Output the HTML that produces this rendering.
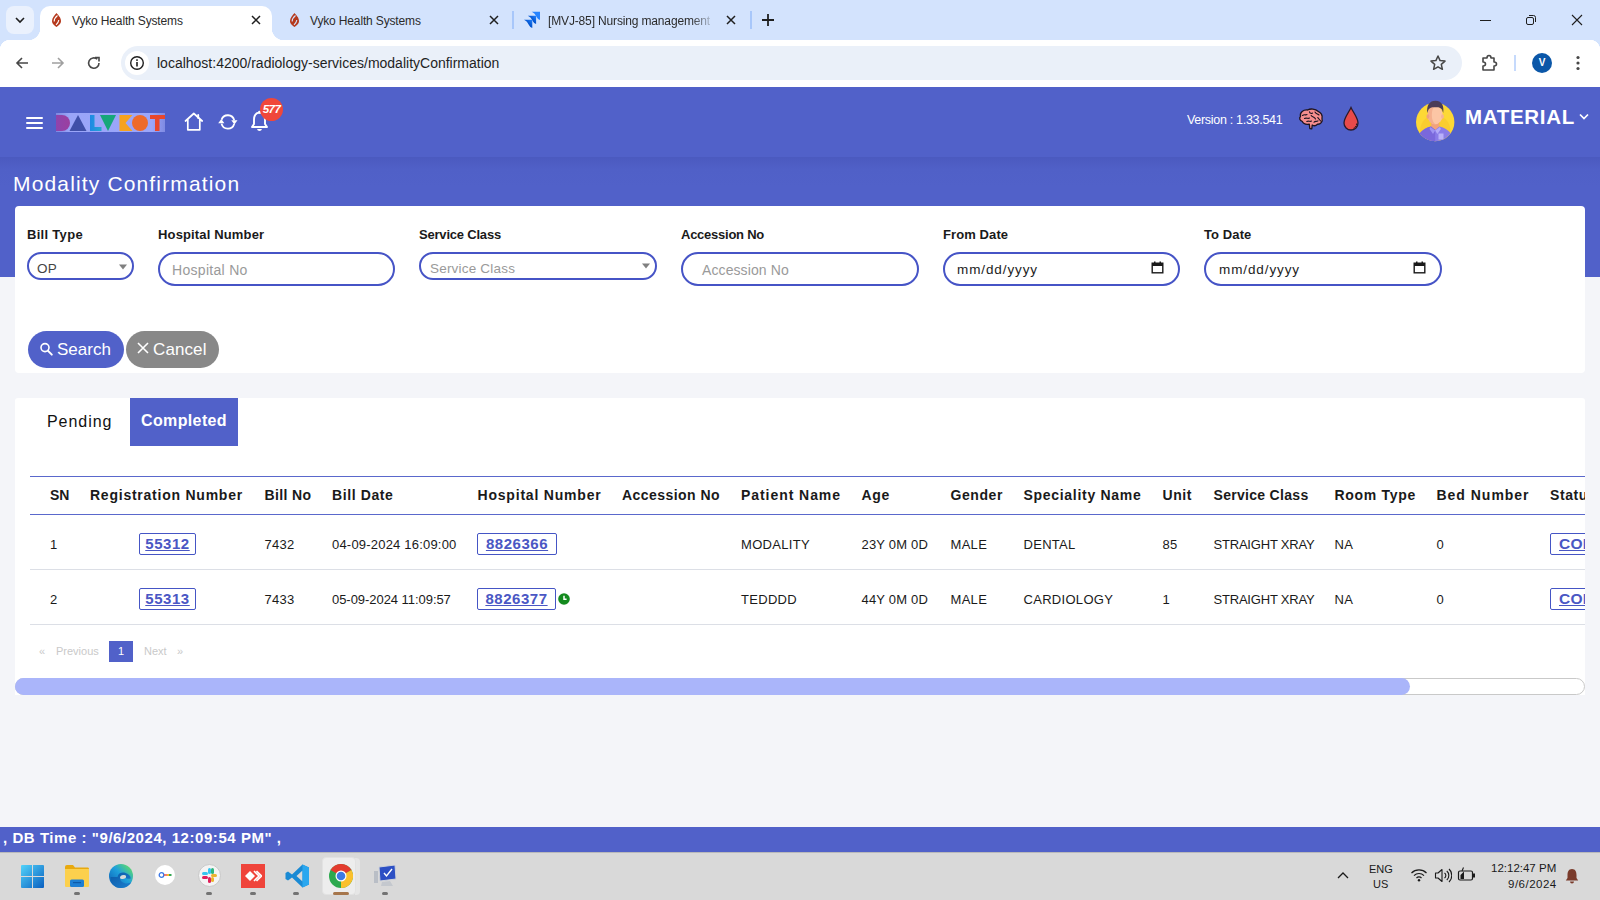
<!DOCTYPE html>
<html><head><meta charset="utf-8">
<style>
*{box-sizing:border-box;margin:0;padding:0}
html,body{width:1600px;height:900px;overflow:hidden;background:#f4f5f9;font-family:"Liberation Sans",sans-serif;position:relative}
.a{position:absolute}
.nw{white-space:nowrap}
/* chrome */
#tabstrip{left:0;top:0;width:1600px;height:40px;background:#d3e3fd}
#toolbar{left:0;top:40px;width:1600px;height:47px;background:#fff}
.tabtxt{font-size:12px;color:#2b2b2b;top:14px;letter-spacing:-0.15px}
#omni{left:121px;top:46px;width:1341px;height:34px;border-radius:17px;background:#eaf0f9}
/* header */
#hdr{left:0;top:87px;width:1600px;height:190px;background:#5161c9}
#hdrshadow{left:0;top:157px;width:1600px;height:30px;background:linear-gradient(#4b5abf,#5060c7 40%,#5161c9)}
.card{background:#fff;border-radius:4px}
.lbl{font-size:13px;font-weight:700;color:#1a1a1a;letter-spacing:0.3px;top:227px}
.inp{border:2px solid #4654c6;border-radius:18px;background:#fff}
.ph{font-size:13.5px;color:#9a9a9a;letter-spacing:0.4px}
.th{font-size:14px;font-weight:700;color:#1a1a1a;top:487px;letter-spacing:0.7px}
.td{font-size:13px;color:#1a1a1a;letter-spacing:0.3px}
.lnk{border:1px solid #4555c5;border-radius:2px;color:#4a57c4;text-decoration:underline;font-size:15px;font-weight:700;text-align:center;letter-spacing:0.55px;line-height:20px!important}
</style></head>
<body>
<!-- ============ CHROME TAB STRIP ============ -->
<div id="tabstrip" class="a"></div>
<!-- active tab -->
<div class="a" style="left:40px;top:6px;width:232px;height:40px;background:#fff;border-radius:10px 10px 0 0"></div>
<div class="a" style="left:28px;top:28px;width:12px;height:12px;background:radial-gradient(circle at 0 0,#d3e3fd 12px,#fff 12.5px)"></div>
<div class="a" style="left:6px;top:6px;width:28px;height:28px;border-radius:8px;background:#eaf1fd"></div>
<svg class="a" style="left:13px;top:14px" width="14" height="12" viewBox="0 0 14 12"><path d="M3 4 L7 8 L11 4" fill="none" stroke="#1f1f1f" stroke-width="1.6"/></svg>
<div class="a" style="left:272px;top:28px;width:12px;height:12px;background:radial-gradient(circle at 100% 0,#d3e3fd 12px,#fff 12.5px)"></div>
<svg class="a" style="left:51px;top:12px" width="11" height="16" viewBox="0 0 11 16"><path d="M5.5 1 C7.5 3.5 10 5.5 10 9 C10 12 7.5 13.5 5.5 15 C3.5 13.5 1 12 1 9 C1 5.5 3.5 3.5 5.5 1 Z" fill="#b5391d"/><path d="M6.5 3.5 C4 5.5 3 7 3.2 9.5" fill="none" stroke="#fff" stroke-width="1.1"/><path d="M7.8 8 C7.5 10.5 6.5 11.5 5 12.8" fill="none" stroke="#fff" stroke-width="1.1"/></svg>
<div class="a nw tabtxt" style="left:72px">Vyko Health Systems</div>
<svg class="a" style="left:250px;top:14px" width="12" height="12" viewBox="0 0 12 12"><path d="M2 2 L10 10 M10 2 L2 10" stroke="#1f1f1f" stroke-width="1.5"/></svg>
<!-- tab 2 -->
<svg class="a" style="left:289px;top:12px" width="11" height="16" viewBox="0 0 11 16"><path d="M5.5 1 C7.5 3.5 10 5.5 10 9 C10 12 7.5 13.5 5.5 15 C3.5 13.5 1 12 1 9 C1 5.5 3.5 3.5 5.5 1 Z" fill="#b5391d"/><path d="M6.5 3.5 C4 5.5 3 7 3.2 9.5" fill="none" stroke="#d3e3fd" stroke-width="1.1"/><path d="M7.8 8 C7.5 10.5 6.5 11.5 5 12.8" fill="none" stroke="#d3e3fd" stroke-width="1.1"/></svg>
<div class="a nw tabtxt" style="left:310px">Vyko Health Systems</div>
<svg class="a" style="left:488px;top:14px" width="12" height="12" viewBox="0 0 12 12"><path d="M2 2 L10 10 M10 2 L2 10" stroke="#1f1f1f" stroke-width="1.5"/></svg>
<div class="a" style="left:512px;top:11px;width:2px;height:18px;background:#a8c7fa"></div>
<!-- tab 3 -->
<svg class="a" style="left:523px;top:11px" width="18" height="18" viewBox="0 0 18 18"><defs><linearGradient id="gj" x1="1" y1="0" x2="0" y2="1"><stop offset="0" stop-color="#2684ff"/><stop offset="0.5" stop-color="#0052cc"/><stop offset="1" stop-color="#2684ff"/></linearGradient></defs><path transform="translate(8.7,0.8)" d="M0 0 H8.3 V8.3 C7 8 5.6 6.8 4.6 4.8 C3.8 3 2.4 1 0 0 Z" fill="#2684ff"/><path transform="translate(4.8,4.8)" d="M0 0 H8.3 V8.3 C7 8 5.6 6.8 4.6 4.8 C3.8 3 2.4 1 0 0 Z" fill="url(#gj)"/><path transform="translate(1,8.7)" d="M0 0 H8.3 V8.3 C7 8 5.6 6.8 4.6 4.8 C3.8 3 2.4 1 0 0 Z" fill="url(#gj)"/></svg>
<div class="a nw tabtxt" style="left:548px;width:168px;overflow:hidden;-webkit-mask-image:linear-gradient(90deg,#000 85%,transparent)">[MVJ-85] Nursing management</div>
<svg class="a" style="left:725px;top:14px" width="12" height="12" viewBox="0 0 12 12"><path d="M2 2 L10 10 M10 2 L2 10" stroke="#1f1f1f" stroke-width="1.5"/></svg>
<div class="a" style="left:750px;top:11px;width:2px;height:18px;background:#a8c7fa"></div>
<svg class="a" style="left:760px;top:12px" width="16" height="16" viewBox="0 0 16 16"><path d="M8 2 V14 M2 8 H14" stroke="#1f1f1f" stroke-width="1.8"/></svg>
<!-- window controls -->
<div class="a" style="left:1480px;top:20px;width:11px;height:1px;background:#1f1f1f"></div>
<svg class="a" style="left:1524px;top:13px" width="14" height="14" viewBox="0 0 14 14"><rect x="2.5" y="4.5" width="7" height="7" rx="1.5" fill="none" stroke="#1f1f1f" stroke-width="1"/><path d="M5 2.5 H9.5 Q11.5 2.5 11.5 4.5 V9" fill="none" stroke="#1f1f1f" stroke-width="1"/></svg>
<svg class="a" style="left:1570px;top:13px" width="14" height="14" viewBox="0 0 14 14"><path d="M2 2 L12 12 M12 2 L2 12" stroke="#1f1f1f" stroke-width="1.1"/></svg>

<!-- ============ TOOLBAR ============ -->
<div id="toolbar" class="a"></div>
<div class="a" style="left:0;top:40px;width:10px;height:10px;background:radial-gradient(circle at 100% 100%,#fff 10px,#d3e3fd 10.5px)"></div>
<div class="a" style="left:1590px;top:40px;width:10px;height:10px;background:radial-gradient(circle at 0 100%,#fff 10px,#d3e3fd 10.5px)"></div>
<svg class="a" style="left:14px;top:55px" width="16" height="16" viewBox="0 0 16 16"><path d="M14 8 H3 M8 3 L3 8 L8 13" fill="none" stroke="#474747" stroke-width="1.6"/></svg>
<svg class="a" style="left:50px;top:55px" width="16" height="16" viewBox="0 0 16 16"><path d="M2 8 H13 M8 3 L13 8 L8 13" fill="none" stroke="#a0a0a0" stroke-width="1.6"/></svg>
<svg class="a" style="left:86px;top:55px" width="16" height="16" viewBox="0 0 16 16"><path d="M13 8 A5.2 5.2 0 1 1 11.3 4.2" fill="none" stroke="#474747" stroke-width="1.6"/><path d="M9 2.5 H13 V6.5" fill="none" stroke="#474747" stroke-width="1.6"/></svg>
<div id="omni" class="a"></div>
<div class="a" style="left:125px;top:51px;width:24px;height:24px;border-radius:12px;background:#fff"></div>
<svg class="a" style="left:129px;top:55px" width="16" height="16" viewBox="0 0 16 16"><circle cx="8" cy="8" r="6.3" fill="none" stroke="#1f1f1f" stroke-width="1.4"/><rect x="7.2" y="7" width="1.6" height="4.5" fill="#1f1f1f"/><rect x="7.2" y="4.3" width="1.6" height="1.6" fill="#1f1f1f"/></svg>
<div class="a nw" style="left:157px;top:55px;font-size:14px;color:#1f1f1f">localhost:4200/radiology-services/modalityConfirmation</div>
<svg class="a" style="left:1429px;top:54px" width="18" height="18" viewBox="0 0 18 18"><path d="M9 2 L11.1 6.6 L16 7.1 L12.3 10.4 L13.4 15.3 L9 12.8 L4.6 15.3 L5.7 10.4 L2 7.1 L6.9 6.6 Z" fill="none" stroke="#474747" stroke-width="1.5" stroke-linejoin="round"/></svg>
<svg class="a" style="left:1479px;top:53px" width="20" height="20" viewBox="0 0 20 20"><path d="M4 5 H8 Q8 2.5 10 2.5 Q12 2.5 12 5 H15 V9 Q17.5 9 17.5 11 Q17.5 13 15 13 V17 H4 V13 Q6.5 13 6.5 11 Q6.5 9 4 9 Z" fill="none" stroke="#474747" stroke-width="1.6" stroke-linejoin="round"/></svg>
<div class="a" style="left:1514px;top:55px;width:2px;height:16px;background:#c6dafc"></div>
<div class="a" style="left:1532px;top:53px;width:20px;height:20px;border-radius:10px;background:#0b57a8;color:#fff;font-size:10px;font-weight:700;text-align:center;line-height:20px">V</div>
<svg class="a" style="left:1574px;top:54px" width="8" height="18" viewBox="0 0 8 18"><circle cx="4" cy="3.5" r="1.6" fill="#474747"/><circle cx="4" cy="9" r="1.6" fill="#474747"/><circle cx="4" cy="14.5" r="1.6" fill="#474747"/></svg>

<!-- ============ APP HEADER ============ -->
<div id="hdr" class="a"></div>
<div id="hdrshadow" class="a"></div>
<!-- placeholder header contents -->
<div class="a" style="left:26px;top:117px;width:17px;height:1.6px;background:#fff;border-radius:1px"></div>
<div class="a" style="left:26px;top:122px;width:17px;height:1.6px;background:#fff;border-radius:1px"></div>
<div class="a" style="left:26px;top:127px;width:17px;height:1.6px;background:#fff;border-radius:1px"></div>
<!-- logo -->
<div class="a" style="left:56px;top:112.5px;width:109px;height:19px;background:linear-gradient(90deg,#7d88e0,#9aa5f8 12%,#9ba6fa 88%,#7f8ae2);filter:blur(0.6px)"></div>
<svg class="a" style="left:55px;top:114px" width="112" height="18" viewBox="0 0 112 18">
<defs><linearGradient id="gD" x1="0" x2="1"><stop offset="0" stop-color="#8e44ad"/><stop offset="1" stop-color="#9b3f9f"/></linearGradient>
<linearGradient id="gL" x1="0" x2="1"><stop offset="0" stop-color="#1e88e5"/><stop offset="1" stop-color="#26a6d1"/></linearGradient></defs>
<path d="M1 1 H7 A8 8 0 0 1 7 17 H1 Z" fill="url(#gD)"/>
<path d="M23 1 L31.5 17 H14.5 Z" fill="#3f4fa8"/>
<path d="M35 1 H39.5 V13 H46.5 V17 H35 Z" fill="url(#gL)"/>
<path d="M45 1 H61 L53 17 Z" fill="#16a77a"/>
<path d="M64.5 1 H77.5 L70.5 9 L77.5 17 H64.5 Z" fill="#f6a21e"/>
<circle cx="85" cy="9" r="8" fill="#ee6a2a"/>
<path d="M95 1 H110 V5 H104.5 V17 H100 V5 H95 Z" fill="#e8472b"/>
</svg>
<!-- home -->
<svg class="a" style="left:183px;top:111px" width="22" height="21" viewBox="0 0 22 21"><path d="M2.5 10 L10.8 2.5 L19.2 10 M4.8 8.5 V18.8 H16.8 V8.5" fill="none" stroke="#fff" stroke-width="1.7" stroke-linejoin="round" stroke-linecap="round"/><path d="M15.2 4 V7" stroke="#fff" stroke-width="1.9" stroke-linecap="round"/></svg>
<!-- refresh -->
<svg class="a" style="left:217px;top:111px" width="22" height="21" viewBox="0 0 22 21"><path d="M4.6 8.6 A6.6 6.6 0 0 1 17.2 9.2" fill="none" stroke="#fff" stroke-width="1.8"/><path d="M17.2 13 A6.6 6.6 0 0 1 4.5 12.6" fill="none" stroke="#fff" stroke-width="1.8"/><path d="M14.3 9.2 H20.5 L17.4 13.6 Z" fill="#fff"/><path d="M1.2 12.3 H7.4 L4.3 7.9 Z" fill="#fff"/></svg>
<!-- bell -->
<svg class="a" style="left:249px;top:110px" width="21" height="22" viewBox="0 0 21 22"><path d="M10.5 2.5 C6.5 3 5 6 5 9.5 V14 L3 17 H18 L16 14 V9.5 C16 6 14.5 3 10.5 2.5 Z" fill="none" stroke="#fff" stroke-width="1.9" stroke-linejoin="round"/><path d="M8 19 A2.6 2.6 0 0 0 13 19 Z" fill="#fff"/><circle cx="10.5" cy="2.2" r="1.4" fill="#fff"/></svg>
<div class="a" style="left:260px;top:98px;width:23px;height:23px;border-radius:12px;background:#f0473a"></div>
<div class="a nw" style="left:259px;top:103px;width:25px;text-align:center;font-size:11.5px;font-weight:700;font-style:italic;color:#fff;letter-spacing:-0.6px">577</div>
<!-- right side -->
<div class="a nw" style="left:1187px;top:113px;font-size:12.5px;color:#fff;letter-spacing:-0.3px">Version : 1.33.541</div>
<svg class="a" style="left:1298px;top:107px" width="26" height="23" viewBox="0 0 26 23"><path d="M2.5 9.5 C1.5 5.5 5.5 2.5 9.5 3 C12.5 1.3 17.5 1.8 20 4.3 C23 5.3 24.8 8.5 24 11.5 C25 14.5 22.5 17.5 19.5 17.2 C18 18.8 15.5 18.8 14.2 18 L13.8 21.8 L11.8 21.5 L11.3 17.2 C8.3 17.7 5.2 16.7 4.2 14.3 C1.8 13.8 0.8 11 2.5 9.5 Z" fill="#f58d8d" stroke="#1e1420" stroke-width="1.3" stroke-linejoin="round"/><path d="M4.5 8.5 C6.5 7 7.5 8.5 9 7.5 M11.5 4.8 C11.8 6.5 13.5 6.8 14.5 6 M17 5 C17.8 6.8 19.5 6.8 21 8 M6.5 11.5 C8.5 10.2 9.8 12.2 11.5 11 M13.2 8.5 C14.5 10.5 16.5 9.8 17.5 12 M19.8 10.5 C20.8 12.5 22 12.3 22.5 14 M8.8 14.5 C10.5 13.5 12 15 13.5 14 M16 15.2 C17 13.8 18.8 15 20 13.8" fill="none" stroke="#1e1420" stroke-width="1.1" stroke-linecap="round"/></svg>
<svg class="a" style="left:1342px;top:106px" width="18" height="26" viewBox="0 0 18 26"><path d="M9 1.5 C7 6 2 12 2 17 A7 7 0 0 0 16 17 C16 12 11 6 9 1.5 Z" fill="#e84a4a" stroke="#2a1a2a" stroke-width="1.3"/><path d="M14.6 17.5 C14.6 19.8 13.3 21.6 11 22.6" fill="none" stroke="#2a1a2a" stroke-width="1" stroke-dasharray="1.5 0.8"/></svg>
<!-- avatar -->
<svg class="a" style="left:1415px;top:100px" width="40" height="42" viewBox="0 0 40 42"><defs><clipPath id="av"><circle cx="20.2" cy="22" r="19.2"/></clipPath></defs>
<circle cx="20.2" cy="22" r="19.2" fill="#fdd835"/>
<g clip-path="url(#av)">
<path d="M5 30 C6 22 10 18 14 17 L26 17 C31 18 34.5 22 35.5 30 L35 40 H5 Z" fill="#f7c62c" opacity="0.6"/>
<rect x="16.2" y="20" width="8" height="10" fill="#f2a27c"/>
<path d="M1.5 42 C2.5 33 8 28.5 16 26.5 L20.2 30 L24.4 26.5 C32.5 28.5 38 33 39 42 Z" fill="#8a7ce8"/>
<path d="M1.5 42 C2.5 33 8 28.5 16 26.5 L20.2 30 V42 Z" fill="#7a68dc"/>
<path d="M15.5 27 L20.2 30.5 L18 34 L14.5 29 Z" fill="#9f94f2"/><path d="M24.9 27 L20.2 30.5 L22.4 34 L25.9 29 Z" fill="#b3aaf8"/>
<rect x="23.5" y="33.5" width="5" height="6" fill="#b9b1fa"/>
</g>
<ellipse cx="20.2" cy="15" rx="7.4" ry="9.3" fill="#fcc6a5"/>
<path d="M20.2 5.7 C15.5 5.7 12.8 9.5 12.8 15 C12.8 20.5 15.5 24.3 20.2 24.3 C17.5 22 16.8 18.5 16.8 15 C16.8 11 17.8 7.5 20.2 5.7 Z" fill="#f4b08f"/>
<ellipse cx="12.9" cy="16.5" rx="1.4" ry="2.2" fill="#f0a07f"/><ellipse cx="27.5" cy="16.5" rx="1.4" ry="2.2" fill="#f5b595"/>
<path d="M12.3 13 C11.3 5.5 14.5 0.8 20.5 0.8 C26.5 0.8 29.3 5.5 28.2 13 L27 9.5 C25.5 7.5 23 7 20.5 7.3 C17.5 7 15 7.5 13.5 9.5 Z" fill="#4a3c58"/>
</svg>
<div class="a nw" style="left:1465px;top:105px;font-size:20.5px;font-weight:700;color:#fff;letter-spacing:0.7px">MATERIAL</div>
<svg class="a" style="left:1578px;top:112px" width="12" height="9" viewBox="0 0 12 9"><path d="M2 2.5 L6 6.5 L10 2.5" fill="none" stroke="#fff" stroke-width="1.7"/></svg>
<div class="a nw" style="left:13px;top:172px;font-size:21px;color:#fff;letter-spacing:1.15px">Modality Confirmation</div>

<!-- ============ FILTER CARD ============ -->
<div class="a card" style="left:15px;top:206px;width:1570px;height:167px"></div>
<div class="a nw lbl" style="left:27px">Bill Type</div>
<div class="a nw lbl" style="left:158px;letter-spacing:0.15px">Hospital Number</div>
<div class="a nw lbl" style="left:419px;letter-spacing:-0.2px">Service Class</div>
<div class="a nw lbl" style="left:681px;letter-spacing:-0.25px">Accession No</div>
<div class="a nw lbl" style="left:943px;letter-spacing:0.1px">From Date</div>
<div class="a nw lbl" style="left:1204px;letter-spacing:0.1px">To Date</div>
<!-- bill type select -->
<div class="a inp" style="left:27px;top:252px;width:107px;height:28px;border-radius:14px"></div>
<div class="a nw" style="left:37px;top:261px;font-size:13.5px;color:#444;letter-spacing:0.3px">OP</div>
<svg class="a" style="left:118px;top:263px" width="10" height="8" viewBox="0 0 10 8"><path d="M1 1.5 H9 L5 6.5 Z" fill="#808080"/></svg>
<!-- hospital no -->
<div class="a inp" style="left:158px;top:252px;width:237px;height:34px;border-radius:17px"></div>
<div class="a nw ph" style="left:172px;top:262px;font-size:14px;letter-spacing:0.3px">Hospital No</div>
<!-- service class select -->
<div class="a inp" style="left:419px;top:252px;width:238px;height:28px;border-radius:14px"></div>
<div class="a nw ph" style="left:430px;top:261px;font-size:13.5px;letter-spacing:0.2px">Service Class</div>
<svg class="a" style="left:641px;top:262px" width="10" height="8" viewBox="0 0 10 8"><path d="M1 1.5 H9 L5 6.5 Z" fill="#808080"/></svg>
<!-- accession -->
<div class="a inp" style="left:681px;top:252px;width:238px;height:34px;border-radius:17px"></div>
<div class="a nw ph" style="left:702px;top:262px;font-size:14px;letter-spacing:0.1px">Accession No</div>
<!-- from date -->
<div class="a inp" style="left:943px;top:252px;width:237px;height:34px;border-radius:17px"></div>
<div class="a nw" style="left:957px;top:262px;font-size:13.5px;color:#222;letter-spacing:0.9px">mm/dd/yyyy</div>
<svg class="a" style="left:1151px;top:261px" width="13" height="13" viewBox="0 0 13 13"><rect x="1.2" y="2.2" width="10.6" height="9.6" fill="none" stroke="#1a1a1a" stroke-width="1.4"/><rect x="1" y="2" width="11" height="3" fill="#1a1a1a"/><rect x="3" y="0.5" width="1.5" height="2.5" fill="#1a1a1a"/><rect x="8.5" y="0.5" width="1.5" height="2.5" fill="#1a1a1a"/></svg>
<!-- to date -->
<div class="a inp" style="left:1204px;top:252px;width:238px;height:34px;border-radius:17px"></div>
<div class="a nw" style="left:1219px;top:262px;font-size:13.5px;color:#222;letter-spacing:0.9px">mm/dd/yyyy</div>
<svg class="a" style="left:1413px;top:261px" width="13" height="13" viewBox="0 0 13 13"><rect x="1.2" y="2.2" width="10.6" height="9.6" fill="none" stroke="#1a1a1a" stroke-width="1.4"/><rect x="1" y="2" width="11" height="3" fill="#1a1a1a"/><rect x="3" y="0.5" width="1.5" height="2.5" fill="#1a1a1a"/><rect x="8.5" y="0.5" width="1.5" height="2.5" fill="#1a1a1a"/></svg>
<!-- buttons -->
<div class="a" style="left:28px;top:331px;width:96px;height:37px;border-radius:19px;background:#5161c9"></div>
<svg class="a" style="left:39px;top:342px" width="15" height="15" viewBox="0 0 15 15"><circle cx="6" cy="5.6" r="4" fill="none" stroke="#fff" stroke-width="1.6"/><path d="M8.8 8.6 L12.8 12.6" stroke="#fff" stroke-width="2" stroke-linecap="round"/></svg>
<div class="a nw" style="left:57px;top:340px;font-size:17px;color:#fff;letter-spacing:0px">Search</div>
<div class="a" style="left:126px;top:331px;width:93px;height:37px;border-radius:19px;background:#888888"></div>
<svg class="a" style="left:137px;top:342px" width="12" height="12" viewBox="0 0 12 12"><path d="M1 1 L11 11 M11 1 L1 11" stroke="#fff" stroke-width="1.6"/></svg>
<div class="a nw" style="left:153px;top:340px;font-size:17px;color:#fff;letter-spacing:0.1px">Cancel</div>

<!-- ============ TABLE CARD ============ -->
<div class="a" style="left:15px;top:398px;width:1570px;height:297px;background:#fff;border-radius:3px 3px 0 0"></div>
<div class="a nw" style="left:47px;top:413px;font-size:16px;color:#111;letter-spacing:0.95px">Pending</div>
<div class="a" style="left:130px;top:398px;width:108px;height:48px;background:#5161c9"></div>
<div class="a nw" style="left:141px;top:412px;font-size:16px;font-weight:700;color:#fff;letter-spacing:0.37px">Completed</div>
<!-- table -->
<div class="a" style="left:15px;top:398px;width:1570px;height:280px;overflow:hidden">
<div class="a" style="left:15px;top:78px;width:1600px;height:1px;background:#5a68cc"></div>
<div class="a" style="left:15px;top:116px;width:1600px;height:1px;background:#5a68cc"></div>
<div class="a" style="left:15px;top:171px;width:1600px;height:1px;background:#dcdfe6"></div>
<div class="a" style="left:15px;top:226px;width:1600px;height:1px;background:#dcdfe6"></div>
<div class="a nw th" style="left:35px;top:89px;letter-spacing:0px">SN</div>
<div class="a nw th" style="left:75px;top:89px;letter-spacing:0.76px">Registration Number</div>
<div class="a nw th" style="left:249.5px;top:89px;letter-spacing:0.39px">Bill No</div>
<div class="a nw th" style="left:317px;top:89px;letter-spacing:0.6px">Bill Date</div>
<div class="a nw th" style="left:462.5px;top:89px;letter-spacing:0.8px">Hospital Number</div>
<div class="a nw th" style="left:607px;top:89px;letter-spacing:0.45px">Accession No</div>
<div class="a nw th" style="left:726px;top:89px;letter-spacing:0.94px">Patient Name</div>
<div class="a nw th" style="left:846.5px;top:89px;letter-spacing:0.73px">Age</div>
<div class="a nw th" style="left:935.5px;top:89px;letter-spacing:0.58px">Gender</div>
<div class="a nw th" style="left:1008.5px;top:89px;letter-spacing:0.7px">Speciality Name</div>
<div class="a nw th" style="left:1147.5px;top:89px;letter-spacing:0.6px">Unit</div>
<div class="a nw th" style="left:1198.5px;top:89px;letter-spacing:0.3px">Service Class</div>
<div class="a nw th" style="left:1319.5px;top:89px;letter-spacing:0.7px">Room Type</div>
<div class="a nw th" style="left:1421.5px;top:89px;letter-spacing:0.98px">Bed Number</div>
<div class="a nw th" style="left:1535px;top:89px;letter-spacing:0.6px">Status</div>
<div class="a nw td" style="left:35px;top:139px">1</div>
<div class="a nw lnk" style="left:124px;top:135px;width:57px;height:22px;line-height:19px">55312</div>
<div class="a nw td" style="left:249.5px;top:139px">7432</div>
<div class="a nw td" style="left:317px;top:139px;letter-spacing:0.2px">04-09-2024 16:09:00</div>
<div class="a nw lnk" style="left:462px;top:135px;width:80px;height:22px;line-height:19px">8826366</div>
<div class="a nw td" style="left:726px;top:139px">MODALITY</div>
<div class="a nw td" style="left:846.5px;top:139px;letter-spacing:0.2px">23Y 0M 0D</div>
<div class="a nw td" style="left:935.5px;top:139px">MALE</div>
<div class="a nw td" style="left:1008.5px;top:139px">DENTAL</div>
<div class="a nw td" style="left:1147.5px;top:139px">85</div>
<div class="a nw td" style="left:1198.5px;top:139px;letter-spacing:-0.2px">STRAIGHT XRAY</div>
<div class="a nw td" style="left:1319.5px;top:139px">NA</div>
<div class="a nw td" style="left:1421.5px;top:139px">0</div>
<div class="a nw lnk" style="left:1535px;top:135px;width:80px;height:22px;line-height:19px;text-align:left;padding-left:8px;letter-spacing:0.3px;font-size:15.5px">CONFIRM</div>
<div class="a nw td" style="left:35px;top:194px">2</div>
<div class="a nw lnk" style="left:124px;top:190px;width:57px;height:22px;line-height:19px">55313</div>
<div class="a nw td" style="left:249.5px;top:194px">7433</div>
<div class="a nw td" style="left:317px;top:194px;letter-spacing:-0.05px">05-09-2024 11:09:57</div>
<div class="a nw lnk" style="left:462px;top:190px;width:79px;height:22px;line-height:19px">8826377</div>
<svg class="a" style="left:542.5px;top:195px" width="12" height="12" viewBox="0 0 12 12"><circle cx="6" cy="6" r="5.8" fill="#138a1e"/><path d="M6 2.8 V6.3 H8.6" fill="none" stroke="#fff" stroke-width="1.5"/></svg>
<div class="a nw td" style="left:726px;top:194px">TEDDDD</div>
<div class="a nw td" style="left:846.5px;top:194px;letter-spacing:0.2px">44Y 0M 0D</div>
<div class="a nw td" style="left:935.5px;top:194px">MALE</div>
<div class="a nw td" style="left:1008.5px;top:194px">CARDIOLOGY</div>
<div class="a nw td" style="left:1147.5px;top:194px">1</div>
<div class="a nw td" style="left:1198.5px;top:194px;letter-spacing:-0.2px">STRAIGHT XRAY</div>
<div class="a nw td" style="left:1319.5px;top:194px">NA</div>
<div class="a nw td" style="left:1421.5px;top:194px">0</div>
<div class="a nw lnk" style="left:1535px;top:190px;width:80px;height:22px;line-height:19px;text-align:left;padding-left:8px;letter-spacing:0.3px;font-size:15.5px">CONFIRM</div>
</div>
<div class="a nw" style="left:39px;top:645px;font-size:11px;color:#c9c9c9">&laquo;</div>
<div class="a nw" style="left:56px;top:645px;font-size:11px;color:#c9c9c9">Previous</div>
<div class="a" style="left:109px;top:641px;width:24px;height:21px;background:#5161c9"></div>
<div class="a nw" style="left:109px;top:645px;width:24px;text-align:center;font-size:11px;color:#fff">1</div>
<div class="a nw" style="left:144px;top:645px;font-size:11px;color:#c9c9c9">Next</div>
<div class="a nw" style="left:177px;top:645px;font-size:11px;color:#c9c9c9">&raquo;</div>
<!-- scrollbar -->
<div class="a" style="left:15px;top:678px;width:1570px;height:17px;border-radius:9px;background:#fff;border:1px solid #c9c9c9"></div>
<div class="a" style="left:15px;top:678px;width:1395px;height:17px;border-radius:9px;background:#aab5fa"></div>

<!-- ============ STATUS BAR ============ -->
<div class="a" style="left:0;top:827px;width:1600px;height:25px;background:#5161c9"></div>
<div class="a nw" style="left:3px;top:829px;font-size:15px;font-weight:700;color:#fff;letter-spacing:0.55px">, DB Time : "9/6/2024, 12:09:54 PM" ,</div>

<!-- ============ TASKBAR ============ -->
<div class="a" style="left:0;top:852px;width:1600px;height:48px;background:#d9d9d9;border-top:1px solid #b9b9bb"></div>
<!-- windows -->
<svg class="a" style="left:21px;top:865px" width="23" height="23" viewBox="0 0 23 23"><defs><linearGradient id="gw" gradientUnits="userSpaceOnUse" x1="0" y1="0" x2="23" y2="23"><stop offset="0" stop-color="#52d3fa"/><stop offset="1" stop-color="#0a5fc0"/></linearGradient></defs><path d="M0 1 Q0 0 1 0 H11 V11 H0 Z M12 0 H22 Q23 0 23 1 V11 H12 Z M0 12 H11 V23 H1 Q0 23 0 22 Z M12 12 H23 V22 Q23 23 22 23 H12 Z" fill="url(#gw)"/></svg>
<!-- explorer -->
<svg class="a" style="left:65px;top:865px" width="24" height="22" viewBox="0 0 24 22"><path d="M0 2 Q0 0 2 0 H8 L10 2.5 H23 Q24 2.5 24 4 V21 H0 Z" fill="#e8a90f"/><path d="M0 4 H24 V21 Q24 22 23 22 H1 Q0 22 0 21 Z" fill="#fcd04d"/><rect x="5" y="14.5" width="14" height="7.5" rx="1.5" fill="#1d7fd4"/><rect x="8" y="17" width="8" height="1.2" fill="#0d5aa8"/></svg>
<div class="a" style="left:74px;top:892px;width:6px;height:3px;border-radius:2px;background:#737373"></div>
<!-- edge -->
<svg class="a" style="left:109px;top:864px" width="24" height="24" viewBox="0 0 24 24"><defs><linearGradient id="ge" x1="0.1" y1="0.9" x2="0.9" y2="0.1"><stop offset="0" stop-color="#0d63b8"/><stop offset="0.55" stop-color="#1ea0dc"/><stop offset="1" stop-color="#5edb6b"/></linearGradient><linearGradient id="ge2" x1="0" y1="0" x2="1" y2="1"><stop offset="0" stop-color="#0c59a6"/><stop offset="1" stop-color="#1a7fd0"/></linearGradient></defs>
<circle cx="12" cy="12" r="12" fill="url(#ge)"/>
<path d="M8.5 13 C9 9.5 12.5 8 16 8.8 C19.5 9.6 21.5 12 21.8 14.5 C20 15 17.5 14.8 16.5 14 C17.8 12.8 17 11 14.8 11 C12.5 11 11 12 11 14 C11 17 14 19.5 18 19.5 C19.5 19.5 21 19 22.3 18.3 C20.3 21.8 16.5 24 12 24 C5.5 24 1 19 1.5 13 Z" fill="url(#ge2)"/>
<path d="M11 14 C11 12 12.5 11 14.8 11 C17 11 17.8 12.8 16.5 14 C15 15.3 12 15.5 11 14 Z" fill="#d9d9d9"/>
</svg>
<!-- key app -->
<div class="a" style="left:155px;top:865px;width:20px;height:20px;border-radius:10px;background:#fff"></div>
<svg class="a" style="left:158px;top:871px" width="14" height="8" viewBox="0 0 14 8"><circle cx="3.5" cy="4" r="2.3" fill="none" stroke="#3b78e7" stroke-width="1.3"/><rect x="6" y="3.3" width="3" height="1.4" fill="#e8453c"/><rect x="9" y="3" width="2" height="2" fill="#f9bb2d"/><rect x="11" y="3" width="2.5" height="2" fill="#34a853"/></svg>
<!-- slack -->
<div class="a" style="left:198px;top:864px;width:23px;height:23px;border-radius:12px;background:#f4f4f4;border:1px solid #c8c8c8"></div>
<svg class="a" style="left:201px;top:867px" width="17" height="17" viewBox="0 0 17 17"><rect x="7" y="1" width="3" height="6" rx="1.5" fill="#36c5f0"/><rect x="1" y="7" width="6" height="3" rx="1.5" fill="#36c5f0" transform="translate(0,-2)"/><rect x="10" y="1" width="3" height="6" rx="1.5" fill="#2eb67d"/><rect x="10" y="7" width="6" height="3" rx="1.5" fill="#ecb22e"/><rect x="7" y="10" width="3" height="6" rx="1.5" fill="#e01e5a"/><rect x="1" y="10" width="6" height="3" rx="1.5" fill="#e01e5a" transform="translate(0,-1)"/><rect x="10" y="10" width="3" height="5" rx="1.5" fill="#ecb22e"/></svg>
<div class="a" style="left:206px;top:892px;width:6px;height:3px;border-radius:2px;background:#737373"></div>
<!-- anydesk -->
<div class="a" style="left:241px;top:864px;width:24px;height:24px;background:#ef443b"></div>
<svg class="a" style="left:244px;top:869px" width="18" height="14" viewBox="0 0 18 14"><path d="M1 7 L6 2 L11 7 L6 12 Z" fill="#fff"/><path d="M10 2 L15 7 L10 12 M12.5 2 L17.5 7 L12.5 12" fill="none" stroke="#fff" stroke-width="1.6"/></svg>
<div class="a" style="left:250px;top:892px;width:6px;height:3px;border-radius:2px;background:#737373"></div>
<!-- vscode -->
<svg class="a" style="left:285px;top:864px" width="24" height="24" viewBox="0 0 24 24"><path d="M17.5 0.5 L24 3.5 V20.5 L17.5 23.5 L7 13.5 L3 16.5 L0.5 15 V9 L3 7.5 L7 10.5 Z M17.5 6.5 L11.5 12 L17.5 17.5 Z" fill="#1a8ad4"/><path d="M17.5 0.5 L24 3.5 V20.5 L17.5 23.5 Z" fill="#2aa7ef"/></svg>
<div class="a" style="left:293px;top:892px;width:6px;height:3px;border-radius:2px;background:#737373"></div>
<!-- chrome -->
<div class="a" style="left:355px;top:858px;width:5px;height:37px;border-radius:0 4px 4px 0;background:#e6e6e6"></div>
<div class="a" style="left:322px;top:857px;width:34px;height:38px;border-radius:4px;background:#ededed;border:1px solid #e2e2e2"></div>
<svg class="a" style="left:329px;top:864px" width="24" height="24" viewBox="0 0 24 24"><circle cx="12" cy="12" r="12" fill="#2da94f"/><path d="M12 12 L1.6 6 A12 12 0 0 1 22.4 6 Z" fill="#e33b2e"/><path d="M12 12 L22.4 6 A12 12 0 0 1 12 24 Z" fill="#fbc02d"/><circle cx="12" cy="12" r="5.5" fill="#fff"/><circle cx="12" cy="12" r="4.3" fill="#3c7ae4"/></svg>
<div class="a" style="left:333px;top:892px;width:16px;height:3px;border-radius:2px;background:#a6764c"></div>
<!-- monitor -->
<svg class="a" style="left:373px;top:865px" width="24" height="22" viewBox="0 0 24 22"><path d="M6 2 L22 0 L23 14 L7 16 Z" fill="#2c4fc4" stroke="#cfd3da" stroke-width="1"/><path d="M11 8 L13.5 11 L19 4" fill="none" stroke="#fff" stroke-width="1.4"/><rect x="1" y="6" width="4" height="12" fill="#b9bec6"/><path d="M9 17 L17 16 L20 21 L8 21 Z" fill="#c4c8ce"/></svg>
<div class="a" style="left:382px;top:892px;width:6px;height:3px;border-radius:2px;background:#737373"></div>
<!-- tray -->
<svg class="a" style="left:1336px;top:870px" width="14" height="10" viewBox="0 0 14 10"><path d="M2 8 L7 3 L12 8" fill="none" stroke="#1a1a1a" stroke-width="1.3"/></svg>
<div class="a nw" style="left:1369px;top:863px;font-size:11px;color:#1a1a1a">ENG</div>
<div class="a nw" style="left:1373px;top:878px;font-size:11px;color:#1a1a1a">US</div>
<svg class="a" style="left:1410px;top:868px" width="18" height="14" viewBox="0 0 18 14"><path d="M1.5 5 A10.5 10.5 0 0 1 16.5 5 M4 7.6 A7 7 0 0 1 14 7.6 M6.5 10 A3.5 3.5 0 0 1 11.5 10" fill="none" stroke="#1a1a1a" stroke-width="1.2"/><circle cx="9" cy="12.3" r="1.2" fill="#1a1a1a"/></svg>
<svg class="a" style="left:1434px;top:868px" width="18" height="15" viewBox="0 0 18 15"><path d="M1.5 5 H4 L8 1.5 V13.5 L4 10 H1.5 Z" fill="none" stroke="#1a1a1a" stroke-width="1.1" stroke-linejoin="round"/><path d="M10.5 5 A3 3 0 0 1 10.5 10 M12.8 3 A6 6 0 0 1 12.8 12 M15 1 A9 9 0 0 1 15 14" fill="none" stroke="#1a1a1a" stroke-width="1.1"/></svg>
<svg class="a" style="left:1457px;top:867px" width="20" height="15" viewBox="0 0 20 15"><rect x="1.5" y="4" width="14" height="9" rx="1.5" fill="none" stroke="#1a1a1a" stroke-width="1.2"/><rect x="16" y="6.5" width="2" height="4" fill="#1a1a1a"/><path d="M3.5 12 V8 L7 4.5 V12 Z" fill="#1a1a1a"/><path d="M5 4 L6.5 0.5" stroke="#1a1a1a" stroke-width="1.1"/></svg>
<div class="a nw" style="left:1491px;top:862px;font-size:11.5px;color:#1a1a1a">12:12:47 PM</div>
<div class="a nw" style="left:1508px;top:878px;font-size:11.5px;color:#1a1a1a;letter-spacing:0.5px">9/6/2024</div>
<svg class="a" style="left:1565px;top:868px" width="14" height="17" viewBox="0 0 14 17"><path d="M7 1 C3.5 1 2.5 4 2.5 7 V10 L0.8 12.5 H13.2 L11.5 10 V7 C11.5 4 10.5 1 7 1 Z" fill="#7a3b2b"/><path d="M5 13.5 A2 2 0 0 0 9 13.5 Z" fill="#7a3b2b"/></svg>
</body></html>
